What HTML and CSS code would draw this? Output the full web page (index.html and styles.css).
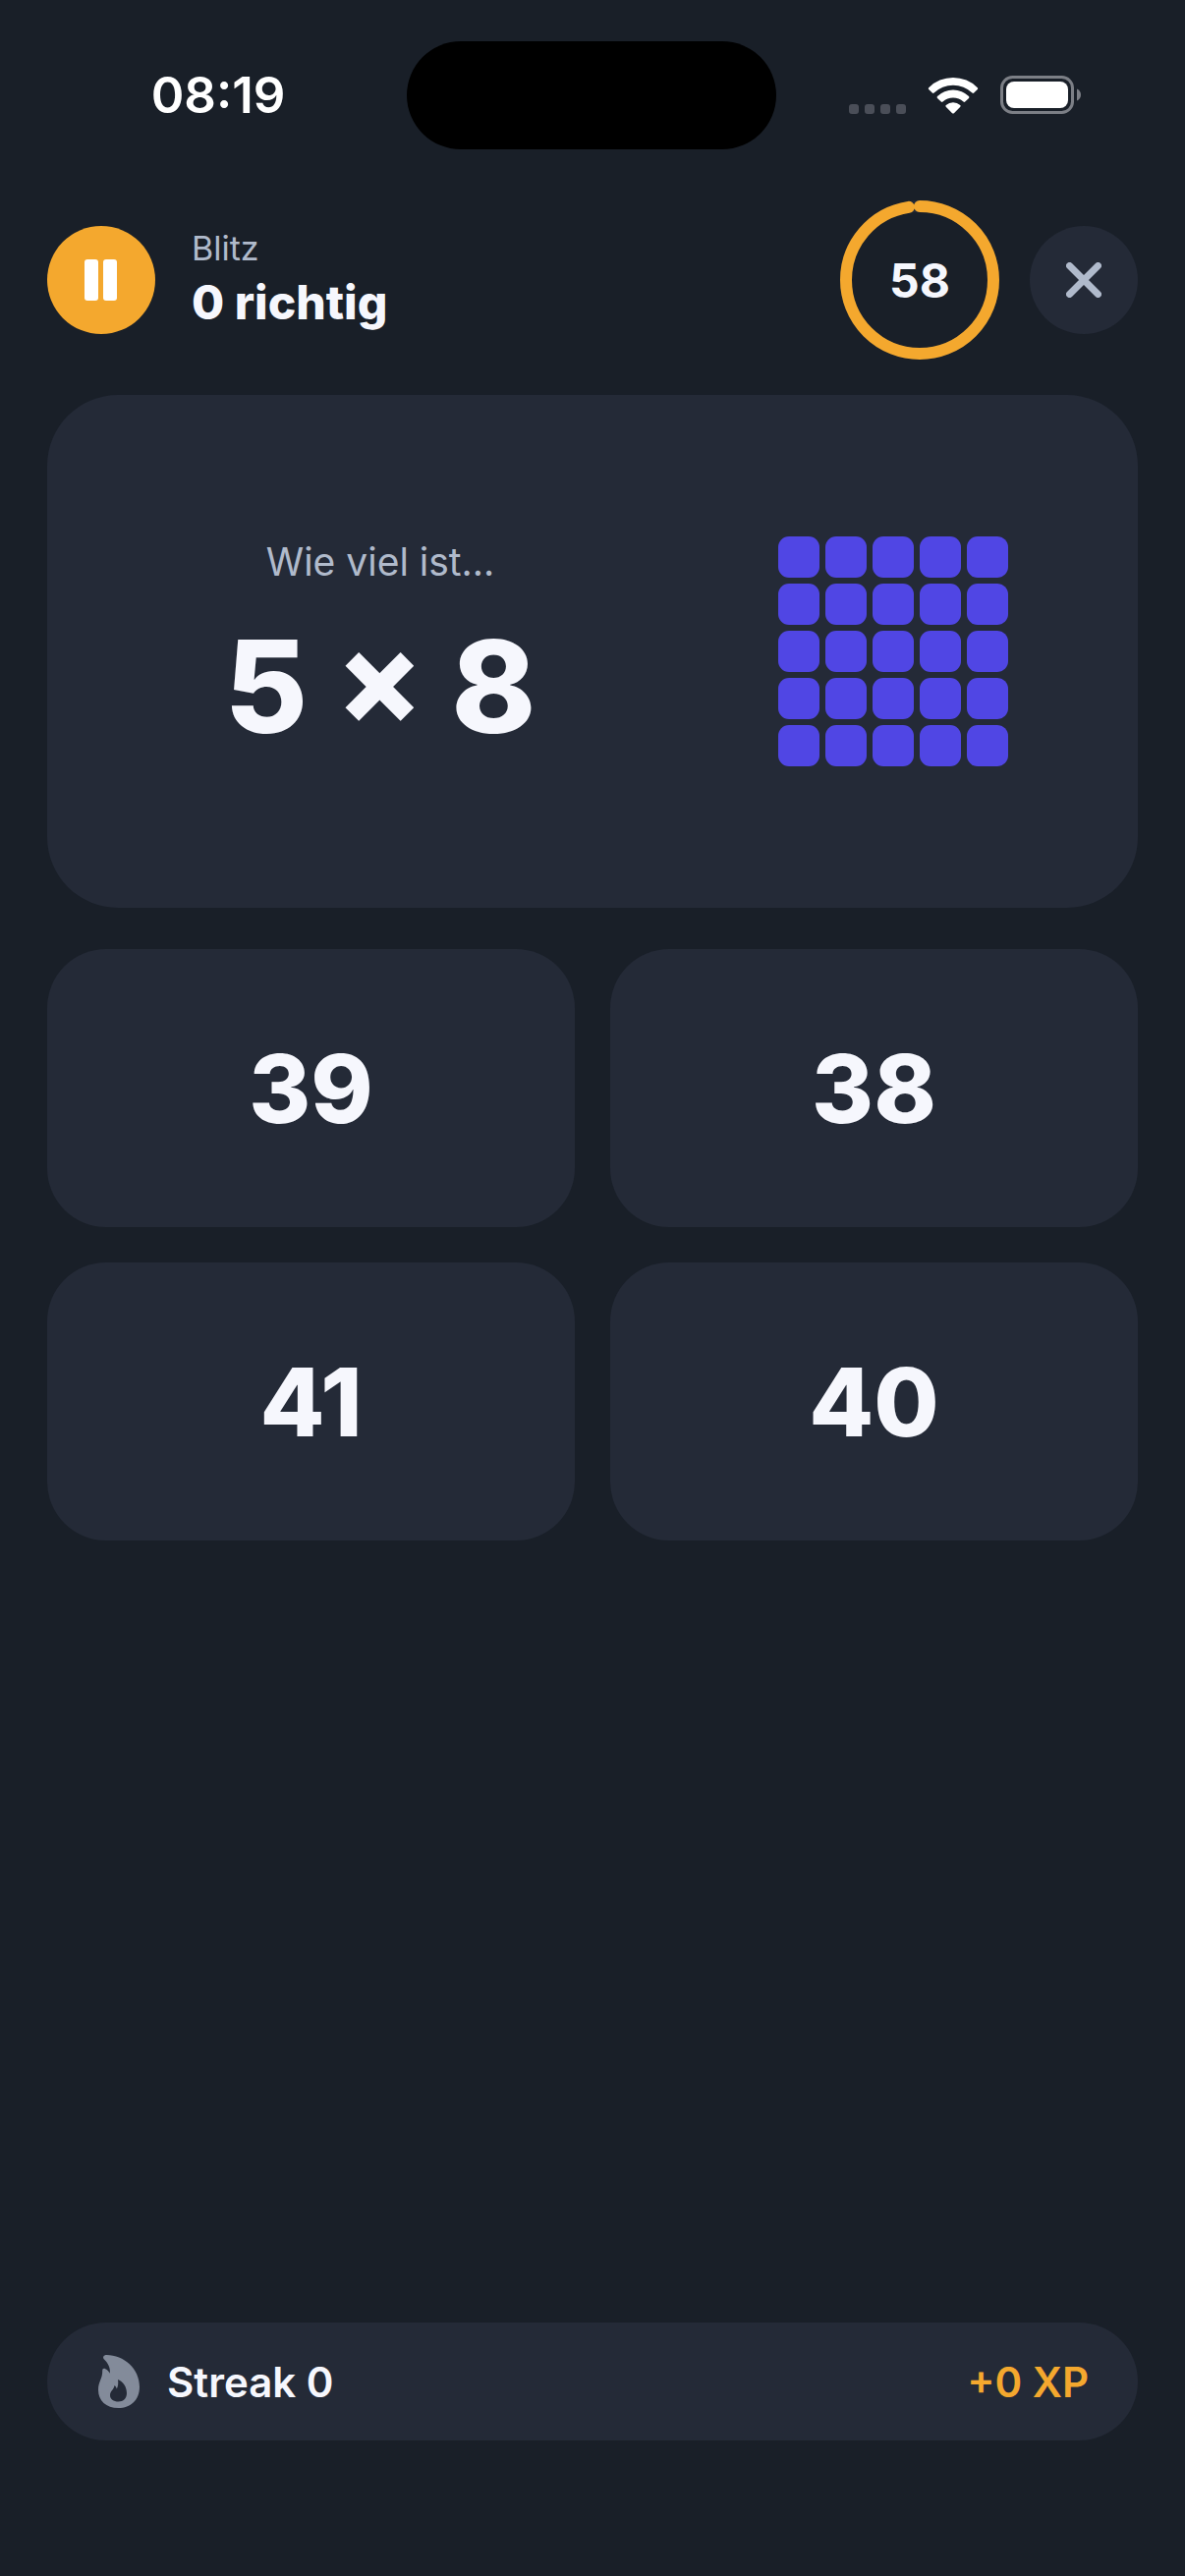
FILE: index.html
```html
<!DOCTYPE html>
<html lang="de">
<head>
    <meta charset="UTF-8">
    <meta name="viewport" content="width=device-width, initial-scale=1.0">
    <title>Blitz</title>
    <link rel="stylesheet" href="styles.css">
</head>
<body>
    <!-- Status bar -->
    <div class="status-bar">
        <div class="status-side">
            <span class="time">08:19</span>
        </div>
        <div class="island"></div>
        <div class="status-side status-icons">
            <svg class="signal" width="58" height="38" viewBox="0 0 58 38">
                <rect x="0" y="28" width="10" height="10" rx="3"/>
                <rect x="16" y="28" width="10" height="10" rx="3"/>
                <rect x="32" y="28" width="10" height="10" rx="3"/>
                <rect x="48" y="28" width="10" height="10" rx="3"/>
            </svg>
            <svg class="wifi" width="52" height="38" viewBox="0 0 52 38">
                <path d="M1.2 11.2a35 35 0 0 1 49.6 0q.8.9 0 1.8l-3.600 3.500q-.9.8-1.800 0a28 28 0 0 0-38.800 0q-.9.8-1.800 0L1.200 13q-.8-.9 0-1.800z"/>
                <path d="M10 20.100a23 23 0 0 1 32 0q.9.9 0 1.800l-3.800 3.700q-.8.8-1.700 0a15.500 15.500 0 0 0-21 0q-.9.8-1.700 0L10 21.900q-.9-.9 0-1.800z"/>
                <path d="M18.800 29a11 11 0 0 1 14.400 0q.9.8.1 1.700l-6.400 6.500q-.9.8-1.800 0l-6.400-6.500q-.8-.9.1-1.700z"/>
            </svg>
            <svg class="battery" width="83" height="40" viewBox="0 0 83 40">
                <rect class="battery-frame" x="1.500" y="1.500" width="72" height="36" rx="11"/>
                <rect class="battery-level" x="6" y="6" width="63" height="27" rx="8"/>
                <path class="battery-tip" d="M78 13.500q4 1.800 4 6t-4 6z"/>
            </svg>
        </div>
    </div>

    <main class="game">
        <header class="game-header">
            <button class="round-button pause-button" aria-label="Pause">
                <svg width="34" height="42" viewBox="0 0 34 42">
                    <rect x="0" y="0" width="14" height="42" rx="3"/>
                    <rect x="19" y="0" width="14" height="42" rx="3"/>
                </svg>
            </button>
            <div class="game-info">
                <span class="mode">Blitz</span>
                <h1 class="score">0 richtig</h1>
            </div>
            <div class="timer">
                <svg width="162" height="162" viewBox="0 0 162 162">
                    <circle class="timer-track" cx="81" cy="81" r="75"/>
                    <circle class="timer-value" cx="81" cy="81" r="75" pathLength="100" transform="rotate(-90 81 81)"/>
                </svg>
                <span class="timer-text">58</span>
            </div>
            <button class="round-button close-button" aria-label="Schließen">
                <svg width="36" height="36" viewBox="0 0 36 36">
                    <path d="M3.500 3.500l29 29M32.500 3.500l-29 29"/>
                </svg>
            </button>
        </header>

        <!-- Question -->
        <section class="question">
            <div class="question-text">
                <p class="prompt">Wie viel ist...</p>
                <p class="task">5 × 8</p>
            </div>
            <div class="question-figure">
                <div class="tiles">
                    <i></i><i></i><i></i><i></i><i></i>
                    <i></i><i></i><i></i><i></i><i></i>
                    <i></i><i></i><i></i><i></i><i></i>
                    <i></i><i></i><i></i><i></i><i></i>
                    <i></i><i></i><i></i><i></i><i></i>
                </div>
            </div>
        </section>

        <!-- Answers -->
        <div class="answers">
            <button class="answer">39</button>
            <button class="answer">38</button>
            <button class="answer">41</button>
            <button class="answer">40</button>
        </div>

        <footer class="streak-bar">
            <svg class="flame" width="42" height="54" viewBox="0 0 42 54">
                <path fill-rule="evenodd" d="M8.500 0C26 0 42 14 42 32.500 42 46 33 54 20.500 54 8 54 0 46.500 0 35.500 0 27 4.500 24 4.200 16c0-2 1.500-2.600 3-1.800 2.200 1 3.800 2.600 4.600 4.600C12.500 13 10 8.500 6 4.500 4 2.300 5.500 0 8.500 0zM20 25c.6 4 .2 7-1.200 9.500-.4-1.600-1-2.600-2.300-3.500-.5 4.500-4.500 5.500-4.500 10 0 4 3.500 6.500 8.500 6.500s8.500-3.500 8.500-8.500c0-6.500-3.500-11.500-9-14z"/>
            </svg>
            <span class="streak">Streak 0</span>
            <span class="xp">+0 XP</span>
        </footer>
    </main>
</body>
</html>
```
FILE: styles.css
```css
:root {
    --background: #191f28;
    --surface: #242a37;
    --text: #f6f7fd;
    --muted: #b0bacb;
    --accent: #f4a82e;
    --tile: #5046e4;
}

* {
    box-sizing: border-box;
}

body {
    font-family: Inter, "Liberation Sans", sans-serif;
    margin: 0;
    min-height: 100vh;
    display: flex;
    flex-direction: column;
    background: var(--background);
    color: var(--text);
}

h1, p {
    margin: 0;
}

button {
    font-family: inherit;
    border: none;
    padding: 0;
    cursor: pointer;
}

svg {
    display: block;
}

/* Status bar */
.status-bar {
    display: flex;
    align-items: center;
    padding-top: 42px;
}

.status-side {
    flex: 1;
    display: flex;
    justify-content: center;
    padding-left: 30px;
    color: white;
}

.time {
    font-size: 51px;
    line-height: 60px;
    font-weight: 600;
}

.island {
    width: 376px;
    height: 110px;
    border-radius: 55px;
    background: black;
}

.status-icons {
    align-items: center;
    gap: 22px;
    padding-left: 0;
    padding-right: 32px;
}

.signal {
    fill: #4a4e58;
}

.wifi, .battery-level {
    fill: white;
}

.battery-frame {
    fill: none;
    stroke: #7c7f86;
    stroke-width: 3;
}

.battery-tip {
    fill: #7c7f86;
}

/* Game */
.game {
    flex: 1;
    display: flex;
    flex-direction: column;
    padding: 52px 48px 138px;
}

.game-header {
    display: flex;
    align-items: center;
    margin-bottom: 36px;
}

.round-button {
    width: 110px;
    height: 110px;
    border-radius: 50%;
    display: flex;
    align-items: center;
    justify-content: center;
}

.pause-button {
    background: var(--accent);
    fill: white;
}

.close-button {
    background: var(--surface);
    fill: none;
    stroke: var(--muted);
    stroke-width: 7;
    stroke-linecap: round;
}

.game-info {
    flex: 1;
    display: flex;
    flex-direction: column;
    margin-left: 37px;
    padding-top: 2px;
}

.mode {
    font-size: 34px;
    line-height: 44px;
    color: var(--muted);
}

.score {
    font-size: 48px;
    line-height: 66px;
    font-weight: 800;
}

.timer {
    position: relative;
    margin-right: 31px;
}

.timer circle {
    fill: none;
    stroke-width: 12;
}

.timer-track {
    stroke: var(--surface);
}

.timer .timer-value {
    stroke: var(--accent);
    stroke-linecap: round;
    stroke-dasharray: 97.6 2.4;
}

.timer-text {
    position: absolute;
    inset: 0;
    display: flex;
    align-items: center;
    justify-content: center;
    font-size: 48px;
    font-weight: 700;
}

/* Question card */
.question {
    display: flex;
    align-items: center;
    gap: 54px;
    padding: 144px 60px;
    margin-bottom: 42px;
    border-radius: 72px;
    background: var(--surface);
}

.question-text {
    flex: 1;
    text-align: center;
}

.prompt {
    font-size: 39px;
    line-height: 50px;
    color: var(--muted);
}

.task {
    font-size: 130px;
    line-height: 160px;
    font-weight: 800;
    margin-top: 22px;
}

.question-figure {
    width: 378px;
    display: flex;
    justify-content: center;
}

.tiles {
    display: grid;
    grid-template-columns: repeat(5, 42px);
    grid-auto-rows: 42px;
    gap: 6px;
}

.tiles i {
    border-radius: 11px;
    background: var(--tile);
}

/* Answers */
.answers {
    display: grid;
    grid-template-columns: 1fr 1fr;
    gap: 36px;
}

.answer {
    height: 283px;
    border-radius: 60px;
    background: var(--surface);
    color: var(--text);
    font-size: 96px;
    font-weight: 800;
}

/* Streak bar */
.streak-bar {
    display: flex;
    align-items: center;
    height: 120px;
    margin-top: auto;
    padding: 0 50px 0 52px;
    border-radius: 60px;
    background: var(--surface);
    font-size: 42px;
    font-weight: 600;
}

.flame {
    fill: #838b9a;
    margin-right: 28px;
}

.xp {
    margin-left: auto;
    color: var(--accent);
}
```
